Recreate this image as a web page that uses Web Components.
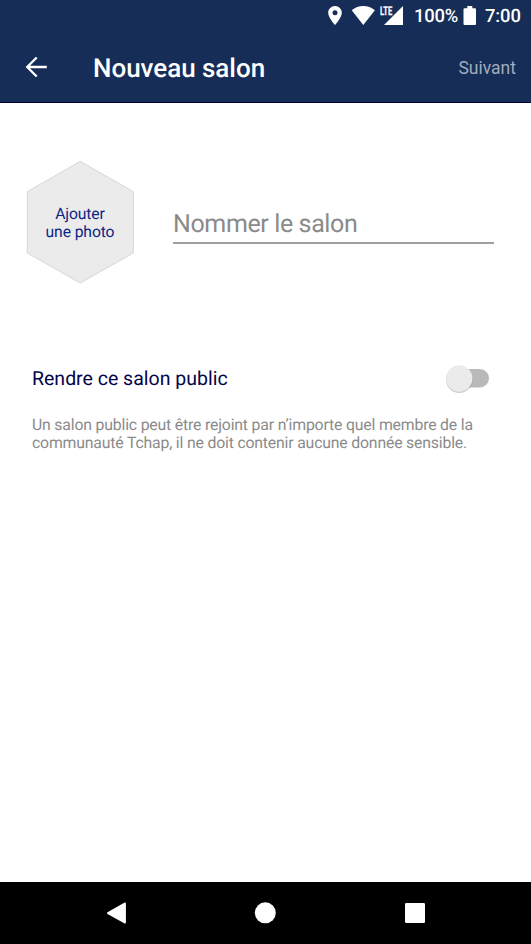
<!DOCTYPE html>
<html lang="fr">
<head>
<meta charset="utf-8">
<title>Nouveau salon</title>
<style>
html,body{margin:0;height:100%}
body{background:#fff;font-family:Roboto,"Liberation Sans",sans-serif;overflow:hidden;text-rendering:geometricPrecision}
</style>
</head>
<body>
<salon-screen></salon-screen>
<script>
const define = (name, html) => customElements.define(name, class extends HTMLElement {
  constructor() {
    super();
    this.attachShadow({ mode: "open" }).innerHTML = html;
  }
});

define("status-bar", `
<style>
:host{display:flex;height:32px;box-sizing:border-box;padding:0 11px 0 0;justify-content:flex-end;align-items:center;color:#fff;font-size:18.4px;font-weight:500;line-height:32px}
svg{display:block;flex:none}
span{white-space:nowrap;padding-top:2px}
.pct{width:45px;margin:0 4px 0 10px;letter-spacing:-.2px}
.time{width:35px;margin-left:8px;letter-spacing:-.1px}
</style>
<svg width="77" height="32" viewBox="327 0 77 32" fill="#fff">
  <path fill-rule="evenodd" d="M335 6c-3.800 0-6.800 3-6.800 6.700C328.200 17.700 335 25 335 25s6.800-7.300 6.800-12.300C341.800 9 338.800 6 335 6zm0 4.300a2.500 2.500 0 1 1 0 5 2.500 2.500 0 0 1 0-5z"/>
  <path d="M351.700 10.300C355 7.500 359 6 363.300 6s8.300 1.500 11.600 4.300L363.300 25z"/>
  <path d="M403 6v19h-19z"/>
  <path d="M379 3h14v13h-14z" fill="#162d57"/>
  <text x="380" y="14.700" textLength="12.300" lengthAdjust="spacingAndGlyphs" font-size="12" font-weight="700" stroke="#fff" stroke-width=".25">LTE</text>
</svg>
<span class="pct">100%</span>
<svg width="14" height="32" viewBox="463 0 14 32"><path d="M467.300 6h5v2.200h2.400c.8 0 1.300.5 1.300 1.300v14.200c0 .8-.5 1.300-1.300 1.300h-9.900c-.8 0-1.300-.5-1.300-1.300V9.500c0-.8.5-1.300 1.300-1.300h2.500z" fill="#fff"/></svg>
<span class="time">7:00</span>`);

define("app-bar", `
<style>
:host{display:flex;height:71px;box-sizing:border-box;border-bottom:1px solid #00003c;padding:0 15px 0 25px;align-items:center;color:#fff}
svg{display:block;flex:none}
h1{margin:4px 0 0 46px;font-size:26px;line-height:34px;font-weight:500;white-space:nowrap;letter-spacing:-.03px}
button{margin:1px 0 0 auto;padding:0;border:0;background:none;font:400 17.500px/24px Roboto,sans-serif;color:#a2abbc}
</style>
<svg width="22" height="22" viewBox="25 56 22 22" fill="none" stroke="#fff" stroke-width="2.300"><path d="M46.800 67H27.500M36.700 57.500L27.200 67l9.500 9.500"/></svg>
<h1><slot></slot></h1>
<button><slot name="action"></slot></button>`);

define("photo-picker", `
<style>
:host{display:grid;width:108px;height:124px;place-items:center;color:#0c2485;font-size:15.700px;line-height:18px;text-align:center;letter-spacing:-.1px}
svg,span{grid-area:1/1}
svg{display:block}
span{white-space:nowrap;margin-top:2px}
</style>
<svg width="108" height="124" viewBox="26 160 108 124"><path d="M80.300 161.300l53 30.400v61.300l-53 30-53-30v-61.300z" fill="#ebebeb" stroke="#d6d6d6" stroke-width="1"/></svg>
<span><slot></slot></span>`);

define("name-field", `
<style>
:host{display:block;width:321px;height:40px;box-sizing:border-box;border-bottom:2px solid #a0a0a0;color:#8a8a8a;font-size:25px;line-height:42px;white-space:nowrap;letter-spacing:-.38px}
</style><slot></slot>`);

define("toggle-switch", `
<style>:host{display:block;width:48px;height:36px}svg{display:block}</style>
<svg width="48" height="36" viewBox="443 361 48 36">
<rect x="450" y="369" width="39" height="18.500" rx="9.250" fill="#b9b9b9"/>
<circle cx="459.300" cy="379.600" r="13.400" fill="#000" opacity=".2"/>
<circle cx="459.300" cy="378.500" r="13.200" fill="#ebebeb"/>
</svg>`);

define("public-setting", `
<style>
:host{display:block}
.row{display:flex;height:36px;align-items:center;justify-content:space-between;color:#04044b;font-size:19.500px;line-height:26px}
p{margin:19px 0 0;color:#8b8b8b;font-size:15.800px;line-height:18px;white-space:nowrap;letter-spacing:-.175px}
</style>
<div class="row"><span><slot></slot></span><toggle-switch></toggle-switch></div>
<p><slot name="help"></slot></p>`);

define("nav-bar", `
<style>:host{display:flex;height:62px;background:#000;justify-content:center}svg{display:block}</style>
<svg width="531" height="62" viewBox="0 882 531 62" fill="#fff">
<path d="M107.500 912.300l16.700-9.600q1.700-.8 1.700.8v19q0 1.600-1.700.8L107.500 913.900q-1.200-.8 0-1.600z"/>
<circle cx="265.300" cy="912.800" r="10.500"/><rect x="405" y="903" width="20" height="20" rx="1.300"/>
</svg>`);

define("salon-screen", `
<style>
:host{display:flex;flex-direction:column;height:944px;width:531px}
header{background:#162d57}
main{flex:1;padding-top:57px}
.identity{display:flex;margin-left:26px;gap:39px}
name-field{margin-top:44px}
public-setting{margin:77px 40px 0 32px}
</style>
<header><status-bar></status-bar><app-bar>Nouveau salon<span slot="action">Suivant</span></app-bar></header>
<main>
<div class="identity"><photo-picker>Ajouter<br>une photo</photo-picker><name-field>Nommer le salon</name-field></div>
<public-setting>Rendre ce salon public<span slot="help">Un salon public peut être rejoint par n’importe quel membre de la<br>communauté Tchap, il ne doit contenir aucune donnée sensible.</span></public-setting>
</main>
<nav-bar></nav-bar>`);
</script>
</body>
</html>
